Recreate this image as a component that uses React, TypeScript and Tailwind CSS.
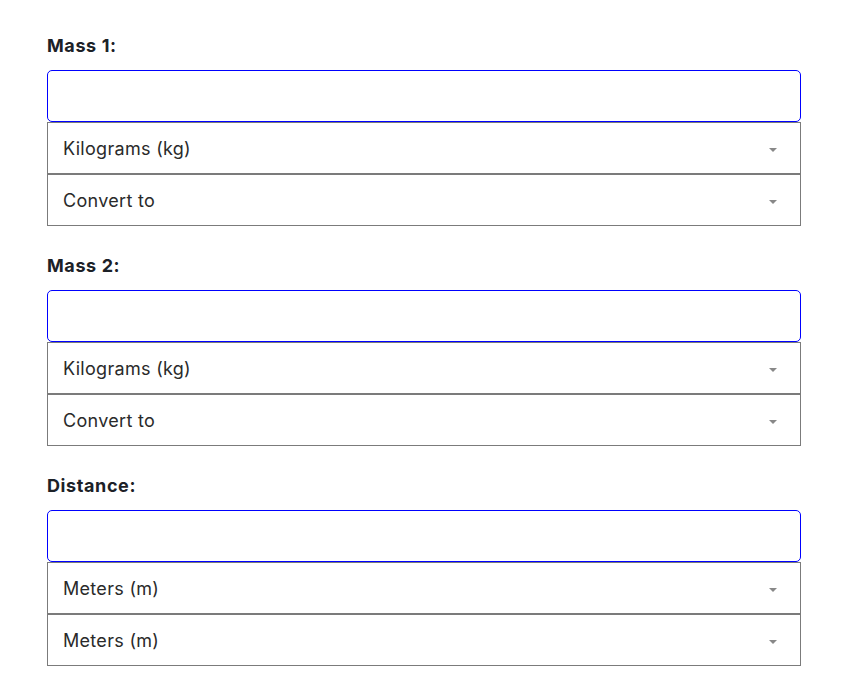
import React from "react";

type Field = {
  label: string;
  from: string[];
  to: string[];
};

const FIELDS: Field[] = [
  { label: "Mass 1:", from: ["Kilograms (kg)", "Grams (g)", "Pounds (lb)"], to: ["Convert to", "Kilograms (kg)", "Grams (g)"] },
  { label: "Mass 2:", from: ["Kilograms (kg)", "Grams (g)", "Pounds (lb)"], to: ["Convert to", "Kilograms (kg)", "Grams (g)"] },
  { label: "Distance:", from: ["Meters (m)", "Kilometers (km)", "Miles (mi)"], to: ["Meters (m)", "Kilometers (km)", "Miles (mi)"] },
];

function Caret() {
  return (
    <svg width="8" height="4" viewBox="0 0 8 4" className="pointer-events-none absolute right-[24px] top-[26px]">
      <path d="M0 0h8L4 4z" fill="#888" />
    </svg>
  );
}

function UnitSelect({ options }: { options: string[] }) {
  return (
    <div className="relative">
      <select
        defaultValue={options[0]}
        className="block h-[52px] w-full appearance-none border border-[#7b7b7b] bg-white pl-[15px] pr-10 text-[18px] tracking-[0.3px] text-[#2a2a2a] outline-none"
      >
        {options.map((o) => (
          <option key={o}>{o}</option>
        ))}
      </select>
      <Caret />
    </div>
  );
}

export default function App() {
  return (
    <div className="min-h-[691px] bg-white pt-[34px] pl-[47px]" style={{ fontFamily: "Inter, 'Noto Sans', sans-serif" }}>
      <div className="flex w-[754px] flex-col gap-[28px]">
        {FIELDS.map((f) => (
          <div key={f.label} className="flex flex-col">
            <label className="mb-[12px] text-[18px] font-bold leading-[24px] tracking-[0.6px] text-[#1c2127]">{f.label}</label>
            <input type="text" className="h-[52px] w-full rounded-[5px] border border-[#0000ff] bg-white px-[15px] text-[18px] outline-none" />
            <UnitSelect options={f.from} />
            <UnitSelect options={f.to} />
          </div>
        ))}
      </div>
    </div>
  );
}
